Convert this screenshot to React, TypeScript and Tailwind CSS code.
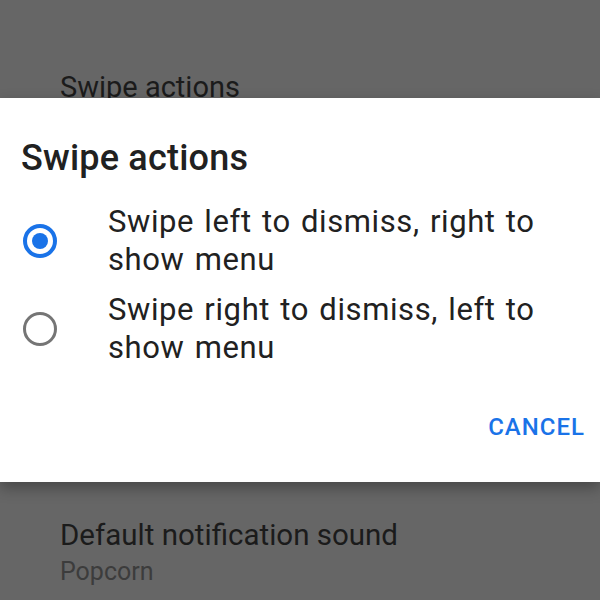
export default function App() {
  const options = [
    { label: "Swipe left to dismiss, right to show menu", selected: true },
    { label: "Swipe right to dismiss, left to show menu", selected: false },
  ];

  return (
    <div
      className="w-[600px] h-[600px] bg-[#666666] flex flex-col overflow-hidden"
      style={{ fontFamily: "Roboto, 'Liberation Sans', sans-serif" }}
    >
      {/* Settings list behind the dialog */}
      <div className="h-[98px] shrink-0 overflow-hidden pl-[60px] pt-[73px]">
        <p className="text-[29px] leading-[28px] text-[#1b1b1b] whitespace-nowrap">
          Swipe actions
        </p>
      </div>

      {/* Dialog */}
      <div className="relative z-10 h-[384px] shrink-0 bg-white shadow-[0_6px_14px_rgba(0,0,0,0.3)] flex flex-col">
        <h2 className="pt-[40px] pl-[21px] text-[36px] leading-[40px] font-medium tracking-[0.2px] text-[#212121]">
          Swipe actions
        </h2>

        <div className="mt-[25px] flex flex-col gap-[12px]">
          {options.map((opt, i) => (
            <div key={i} className="flex items-center">
              <div className="w-[108px] shrink-0 pl-[23px]">
                {opt.selected ? (
                  <div className="w-[34px] h-[34px] rounded-full border-[4px] border-[#1a73e8] flex items-center justify-center">
                    <div className="w-[16px] h-[16px] rounded-full bg-[#1a73e8]" />
                  </div>
                ) : (
                  <div className="w-[34px] h-[34px] rounded-full border-[3px] border-[#757575]" />
                )}
              </div>
              <p className="pr-[40px] text-[31px] leading-[38px] tracking-[0.6px] [word-spacing:2px] text-[#212121]">
                {opt.label}
              </p>
            </div>
          ))}
        </div>

        <div className="mt-[48px] flex justify-end pr-[15px]">
          <span className="text-[24px] leading-[24px] font-medium tracking-[1px] text-[#1a73e8]">
            CANCEL
          </span>
        </div>
      </div>

      {/* Settings list below */}
      <div className="flex-1 pl-[60px] pt-[36px]">
        <p className="text-[29.5px] leading-[34px] text-[#1b1b1b] whitespace-nowrap">
          Default notification sound
        </p>
        <p className="mt-[4px] text-[25px] leading-[32px] text-[#3c3c3c]">
          Popcorn
        </p>
      </div>
    </div>
  );
}
